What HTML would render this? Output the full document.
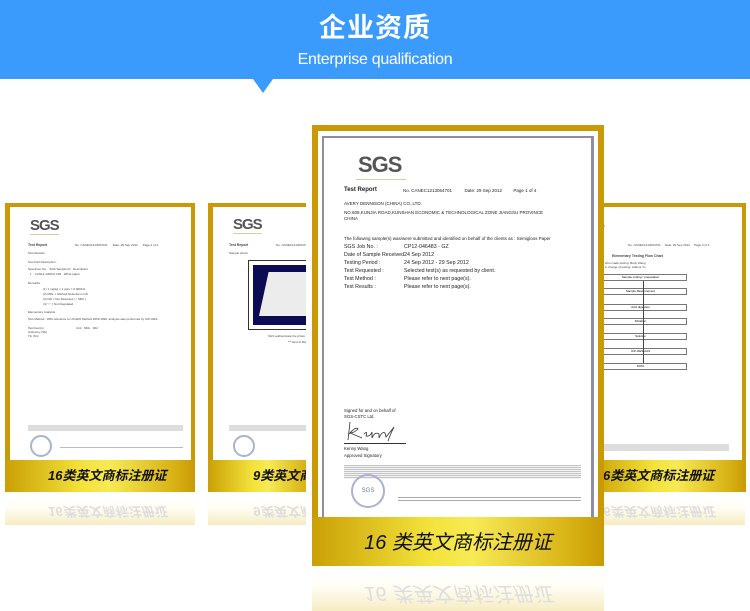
<!DOCTYPE html>
<html><head><meta charset="utf-8">
<style>
*{margin:0;padding:0;box-sizing:border-box}
body{width:750px;height:611px;background:#fff;position:relative;overflow:hidden;font-family:"Liberation Sans","Noto Sans CJK SC",sans-serif}
.banner{position:absolute;left:0;top:0;width:750px;height:79px;background:#3a9bfd;color:#fff;text-align:center}
.banner .cn{position:absolute;left:0;right:0;top:11px;font-size:27px;line-height:34px;letter-spacing:1px;font-weight:bold}
.banner .en{position:absolute;left:0;right:0;top:50px;font-size:16px;line-height:20px;letter-spacing:-0.3px}
.tri{position:absolute;left:253px;top:79px;width:0;height:0;border-left:10px solid transparent;border-right:10px solid transparent;border-top:14px solid #3a9bfd}
.card{position:absolute;background:#c99a06}
.paper{position:absolute;background:#fff;overflow:hidden}
.band{position:absolute;left:0;right:0;bottom:0;background:linear-gradient(90deg,#c9a006,#f3e23a 40%,#f7ea55 55%,#d6b012 90%,#c99a06);color:#111;font-style:italic;font-weight:bold;white-space:nowrap}
.refl{position:absolute;background:linear-gradient(#f6ecc2,#fffdf4 60%,#fff);color:#ddd;font-style:italic;font-weight:bold;white-space:nowrap;transform:scaleY(-1);overflow:hidden}
.sgs{position:absolute;font-weight:bold;color:#555;letter-spacing:-1px;border-bottom:1px solid #d8cca0}
.t{position:absolute;font-size:3px;color:#444;white-space:nowrap}
.t2{position:absolute;color:#222;white-space:nowrap;font-size:5.3px}
.line{position:absolute;height:1px;background:#bbb}
</style></head><body>
<div class="banner"><div class="cn">企业资质</div><div class="en">Enterprise qualification</div></div>
<div class="tri"></div>

<!-- left card -->
<div class="card" style="left:5px;top:203px;width:190px;height:289px">
 <div class="paper" style="left:5px;top:4px;width:181px;height:254px">
  <div class="sgs" style="left:20px;top:10px;font-size:15px">SGS</div>
  <div class="t" style="left:18px;top:36px;font-weight:bold;font-size:3.5px">Test Report</div>
  <div class="t" style="left:65px;top:36px">No. CANEC1213064701 &nbsp;&nbsp;&nbsp;&nbsp; Date: 29 Sep 2012 &nbsp;&nbsp;&nbsp;&nbsp; Page 2 of 4</div>
  <div class="t" style="left:18px;top:44px">Test Results :</div>
  <div class="t" style="left:18px;top:53px">Test Part Description :</div>
  <div class="t" style="left:18px;top:60px">Specimen No. &nbsp; SGS Sample ID &nbsp; Description</div>
  <div class="t" style="left:18px;top:65px">&nbsp;&nbsp;1 &nbsp;&nbsp; CAN12-130647.002 &nbsp; White paper</div>
  <div class="t" style="left:18px;top:74px">Remarks :</div>
  <div class="t" style="left:33px;top:80px">(1) 1 mg/kg = 1 ppm = 0.0001%</div>
  <div class="t" style="left:33px;top:85px">(2) MDL = Method Detection Limit</div>
  <div class="t" style="left:33px;top:90px">(3) ND = Not Detected ( &lt; MDL )</div>
  <div class="t" style="left:33px;top:95px">(4) "-" = Not Regulated</div>
  <div class="t" style="left:18px;top:103px">Elementary Analysis</div>
  <div class="t" style="left:18px;top:110px">Test Method : With reference to US EPA Method 3052:1996, analysis was performed by ICP-OES.</div>
  <div class="t" style="left:18px;top:119px">Test Item(s) &nbsp;&nbsp;&nbsp;&nbsp;&nbsp;&nbsp;&nbsp;&nbsp;&nbsp;&nbsp;&nbsp;&nbsp;&nbsp;&nbsp;&nbsp;&nbsp;&nbsp;&nbsp;&nbsp;&nbsp;&nbsp;&nbsp;&nbsp;&nbsp;&nbsp;&nbsp;&nbsp;&nbsp;&nbsp;&nbsp;&nbsp;&nbsp;&nbsp;&nbsp;&nbsp;&nbsp;&nbsp; Unit &nbsp; MDL &nbsp; 002</div>
  <div class="t" style="left:18px;top:123px">Antimony (Sb)</div>
  <div class="t" style="left:18px;top:127px">Tin (Sn)</div>
  <div class="line" style="left:18px;top:218px;width:155px;height:6px;background:#ddd"></div>
  <div style="position:absolute;left:20px;top:228px;width:22px;height:22px;border:2px solid #a9b3cf;border-radius:50%"></div>
  <div class="line" style="left:50px;top:240px;width:123px"></div>
 </div>
 <div class="band" style="height:32px;font-size:13px;line-height:32px;padding-left:43px">16类英文商标注册证</div>
</div>
<div class="refl" style="left:5px;top:497px;width:190px;height:28px;font-size:13px;line-height:28px;padding-left:43px">16类英文商标注册证</div>

<!-- middle-left card -->
<div class="card" style="left:208px;top:203px;width:110px;height:289px">
 <div class="paper" style="left:5px;top:4px;width:105px;height:254px">
  <div class="sgs" style="left:20px;top:9px;font-size:15px">SGS</div>
  <div class="t" style="left:16px;top:36px;font-weight:bold;font-size:3.5px">Test Report</div>
  <div class="t" style="left:63px;top:36px">No. CANEC1213064701</div>
  <div class="t" style="left:16px;top:44px">Sample photo:</div>
  <div style="position:absolute;left:35px;top:53px;width:80px;height:70px;border:1px solid #333;padding:4px"><div style="width:100%;height:100%;background:#0c0c55;position:relative"><div style="position:absolute;left:6px;top:7px;right:0;bottom:9px;background:#ececec;clip-path:polygon(15% 0,100% 0,100% 100%,0 100%)"></div></div></div>
  <div class="t" style="left:55px;top:127px">SGS authenticate the photo on original sample only</div>
  <div class="t" style="left:75px;top:133px">*** End of Report ***</div>
  <div class="line" style="left:16px;top:218px;width:90px;height:6px;background:#ddd"></div>
  <div style="position:absolute;left:20px;top:228px;width:22px;height:22px;border:2px solid #a9b3cf;border-radius:50%"></div>
 </div>
 <div class="band" style="height:32px;font-size:13px;line-height:32px;padding-left:45px">9类英文商标</div>
</div>
<div class="refl" style="left:208px;top:497px;width:110px;height:28px;font-size:13px;line-height:28px;padding-left:45px">9类英文商标</div>

<!-- right card -->
<div class="card" style="left:592px;top:203px;width:154px;height:289px">
 <div class="paper" style="left:0;top:4px;width:150px;height:254px">
  <div class="sgs" style="left:3px;top:9px;font-size:15px">S</div>
  <div class="t" style="left:36px;top:36px">No. CANEC1213064701 &nbsp;&nbsp;&nbsp; Date: 29 Sep 2012 &nbsp;&nbsp;&nbsp; Page 3 of 4</div>
  <div class="t" style="left:20px;top:47px;font-weight:bold;font-size:3.5px">Elementary Testing Flow Chart</div>
  <div class="t" style="left:3px;top:54px">person who made testing: Betty Wang</div>
  <div class="t" style="left:3px;top:58px">person in charge of testing: Adams Yu</div>
  <div style="position:absolute;left:2px;top:67px;width:93px;height:7px;border:1px solid #777;font-size:3px;text-align:center">Sample cutting / preparation</div>
  <div style="position:absolute;left:2px;top:81px;width:93px;height:7px;border:1px solid #777;font-size:3px;text-align:center">Sample Measurement</div>
  <div style="position:absolute;left:2px;top:97px;width:93px;height:7px;border:1px solid #777;font-size:3px;text-align:center">Acid digestion</div>
  <div style="position:absolute;left:2px;top:111px;width:93px;height:7px;border:1px solid #777;font-size:3px;text-align:center">Filtration</div>
  <div style="position:absolute;left:2px;top:126px;width:93px;height:7px;border:1px solid #777;font-size:3px;text-align:center">Solution</div>
  <div style="position:absolute;left:2px;top:141px;width:93px;height:7px;border:1px solid #777;font-size:3px;text-align:center">ICP-OES/AAS</div>
  <div style="position:absolute;left:2px;top:156px;width:93px;height:7px;border:1px solid #777;font-size:3px;text-align:center">DATA</div>
  <div style="position:absolute;left:51px;top:74px;width:1px;height:82px;background:#444"></div>
  <div class="line" style="left:2px;top:237px;width:135px;height:7px;background:#ddd"></div>
 </div>
 <div class="band" style="height:32px;font-size:13px;line-height:32px;padding-left:11px">6类英文商标注册证</div>
</div>
<div class="refl" style="left:597px;top:497px;width:148px;height:28px;font-size:13px;line-height:28px;padding-left:6px">6类英文商标注册证</div>

<!-- center card -->
<div style="position:absolute;left:306px;top:125px;width:6px;height:441px;background:#fff"></div>
<div class="card" style="left:312px;top:125px;width:292px;height:441px">
 <div class="paper" style="left:6px;top:6px;width:280px;height:387px">
  <div style="position:absolute;left:4px;top:5px;width:272px;height:400px;border:2px solid #8e8ea0;border-right-width:3px"></div>
  <div class="sgs" style="left:38px;top:21px;font-size:22px;padding:0 5px 1px 2px">SGS</div>
  <div class="t2" style="left:26px;top:56px;font-weight:bold;font-size:6px">Test Report</div>
  <div class="t2" style="left:85px;top:57px;font-size:4.5px">No. CANEC1213064701 &nbsp;&nbsp;&nbsp;&nbsp;&nbsp;&nbsp;&nbsp;&nbsp; Date: 29 Sep 2012 &nbsp;&nbsp;&nbsp;&nbsp;&nbsp;&nbsp;&nbsp; Page 1 of 4</div>
  <div class="t2" style="left:26px;top:70px;font-size:4.5px">AVERY DENNISON (CHINA) CO.,LTD.</div>
  <div class="t2" style="left:26px;top:79px;font-size:4.5px">NO.608,KUNJIA ROAD,KUNSHAN ECONOMIC &amp; TECHNOLOGICAL ZONE JIANGSU PROVINCE</div>
  <div class="t2" style="left:26px;top:85px;font-size:4.5px">CHINA</div>
  <div class="t2" style="left:26px;top:105px;font-size:4.5px">The following sample(s) was/were submitted and identified on behalf of the clients as : Semigloss Paper</div>
  <div class="t2" style="left:26px;top:113px">SGS Job No. :</div><div class="t2" style="left:86px;top:113px">CP12-046483 - GZ</div>
  <div class="t2" style="left:26px;top:121px">Date of Sample Received :</div><div class="t2" style="left:86px;top:121px">24 Sep 2012</div>
  <div class="t2" style="left:26px;top:129px">Testing Period :</div><div class="t2" style="left:86px;top:129px">24 Sep 2012 - 29 Sep 2012</div>
  <div class="t2" style="left:26px;top:137px">Test Requested :</div><div class="t2" style="left:86px;top:137px">Selected test(s) as requested by client.</div>
  <div class="t2" style="left:26px;top:145px">Test Method :</div><div class="t2" style="left:86px;top:145px">Please refer to next page(s).</div>
  <div class="t2" style="left:26px;top:153px">Test Results :</div><div class="t2" style="left:86px;top:153px">Please refer to next page(s).</div>
  <div class="t2" style="left:26px;top:277px;font-size:4.3px">Signed for and on behalf of</div>
  <div class="t2" style="left:26px;top:283px;font-size:4.3px">SGS-CSTC Ltd.</div>
  <svg style="position:absolute;left:26px;top:289px" width="60" height="22"><path d="M6 2 L4 20 M5 14 Q12 6 14 9 Q10 13 6 13 Q11 15 18 18 M20 14 Q24 10 22 16 Q26 17 28 12 L28 18 Q31 11 35 14 L35 18 Q38 11 41 13 L42 17 Q47 11 50 7 Q46 15 44 21" fill="none" stroke="#333" stroke-width="0.8"/></svg>
  <div class="line" style="left:26px;top:312px;width:62px;background:#333"></div>
  <div class="t2" style="left:26px;top:315px;font-size:4.3px">Kenny Wang</div>
  <div class="t2" style="left:26px;top:322px;font-size:4.3px">Approved Signatory</div>
  <div class="line" style="left:26px;top:334px;width:237px;height:14px;background:repeating-linear-gradient(#c4c4c4 0 1px,#f3f3f3 1px 2px)"></div>
  <div style="position:absolute;left:33px;top:343px;width:34px;height:34px;border:2px solid #a9b3cf;border-radius:50%;font-size:6px;color:#6a78a8;text-align:center;line-height:30px">SGS</div>
  <div class="line" style="left:80px;top:366px;width:183px;height:6px;background:repeating-linear-gradient(#aaa 0 1px,#fff 1px 3px)"></div>
 </div>
 <div class="band" style="height:49px;font-size:20px;line-height:52px;text-align:center;font-weight:normal">16 类英文商标注册证</div>
</div>
<div class="refl" style="left:312px;top:571px;width:292px;height:40px;font-size:20px;line-height:36px;text-align:center;font-weight:normal">16 类英文商标注册证</div>
</body></html>
